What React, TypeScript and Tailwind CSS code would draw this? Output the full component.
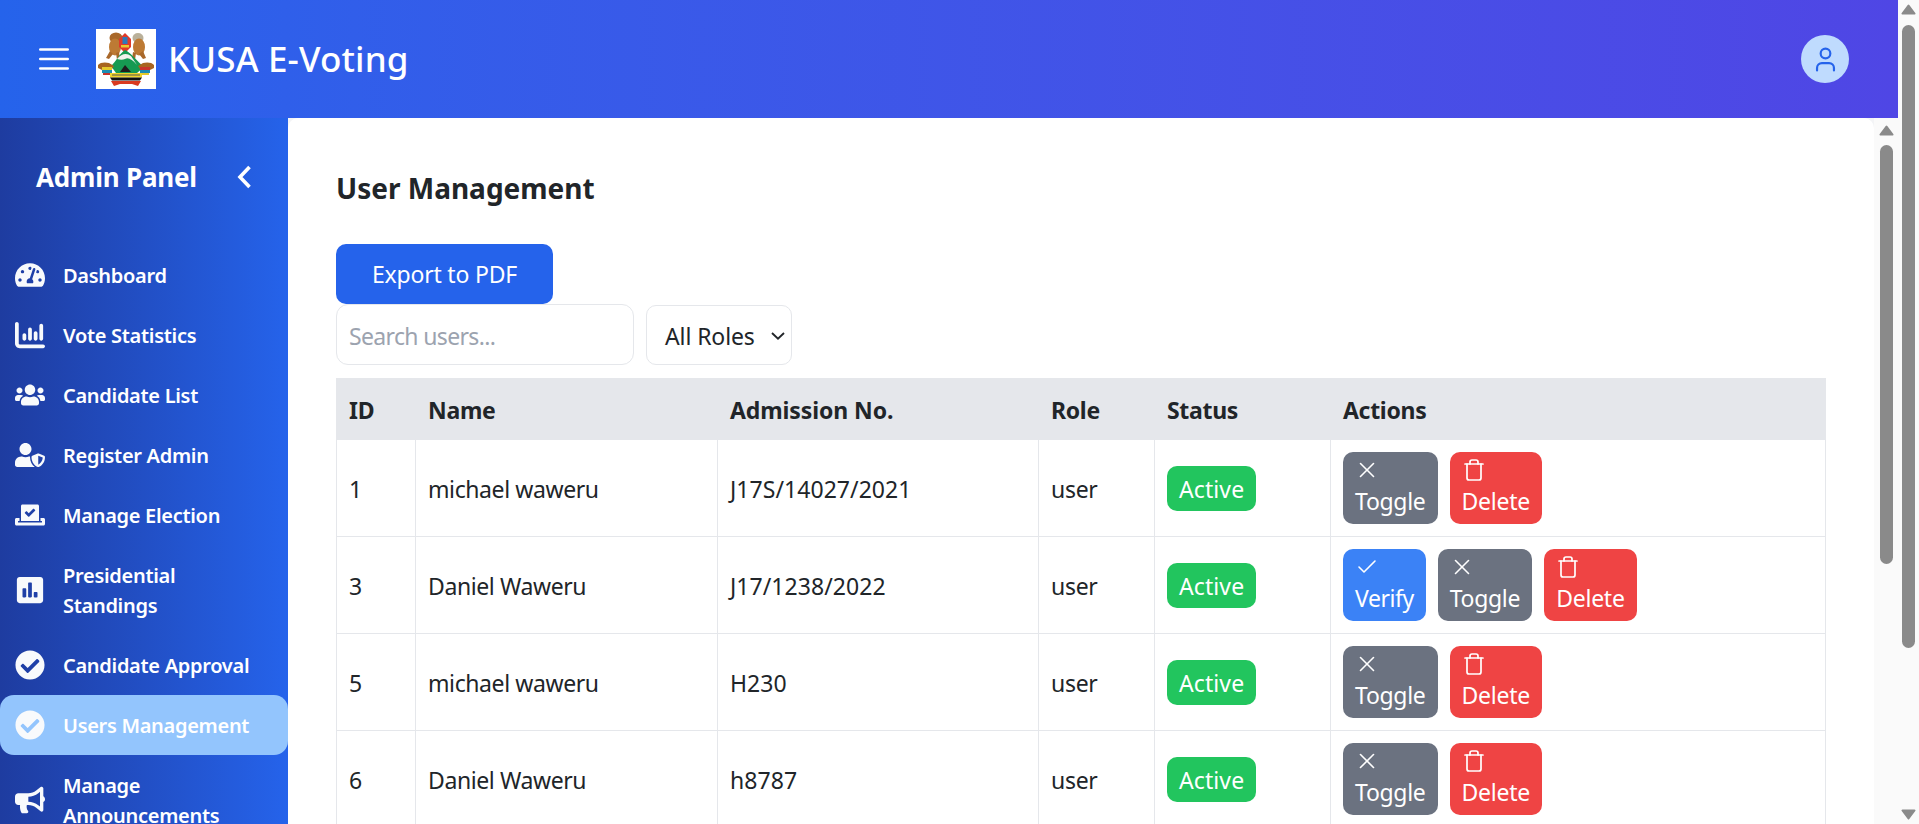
import React from "react";
import { User, X, Check, Trash } from "lucide-react";
import { FaTachometerAlt, FaUsers, FaUserShield, FaVoteYea, FaPoll, FaCheckCircle, FaBullhorn } from "react-icons/fa";
import { FaChartColumn } from "react-icons/fa6";

const Logo = () => (
  <div className="w-[60px] h-[60px] bg-white shrink-0">
    <svg viewBox="0 0 60 60" className="w-full h-full">
      <ellipse cx="20" cy="9" rx="6.5" ry="5.5" fill="#a9682a" />
      <ellipse cx="19" cy="18" rx="6" ry="8.5" fill="#bd7a34" />
      <path d="M14 22l-4 7 3 1 4-5zM20 24l1 7 3-1-1-7z" fill="#a9682a" />
      <ellipse cx="42" cy="9" rx="5.5" ry="5" fill="#b9b09a" />
      <ellipse cx="43" cy="18" rx="6" ry="8.5" fill="#bd7a34" />
      <path d="M47 22l3 7-3 1-4-5zM40 24l-1 7-3-1 1-7z" fill="#a9682a" />
      <path d="M29 4l6 6v8l-6 6-6-6v-8z" fill="#dd3a2a" />
      <rect x="26.5" y="8" width="5" height="7" fill="#2f78b8" />
      <path d="M25 16h8v2.5h-8z" fill="#e9c82e" />
      <path d="M15 37c4-3 8-12 14-16 6 3 12 11 19 17l-7 6H20z" fill="#169a52" />
      <path d="M21 30c5-6 10-6 14-3l6 9c-5-6-9-8-12-6-2 1-5 1-8 0z" fill="#f2f2ee" />
      <path d="M24 43l5-7 6 7z" fill="#1d1d1d" />
      <path d="M2 36c2-3 8-3 11-2l5 3-2 3-10 1-4-2z" fill="#a8641f" />
      <path d="M58 36c-2-3-8-3-11-2l-5 3 2 3 10 1 4-2z" fill="#a8641f" />
      <rect x="6" y="38" width="10" height="3" fill="#e4c92b" />
      <rect x="6" y="41" width="10" height="3" fill="#1c8db3" />
      <rect x="7" y="44" width="8" height="2" fill="#c9342b" />
      <rect x="44" y="38" width="10" height="3" fill="#c9342b" />
      <rect x="44" y="41" width="10" height="3" fill="#1c8db3" />
      <rect x="45" y="44" width="8" height="2" fill="#e4c92b" />
      <rect x="14" y="44" width="32" height="4.5" fill="#efd42a" />
      <rect x="16" y="45.5" width="28" height="1" fill="#555" />
      <path d="M14 48.5h32l-2 3H16z" fill="#111" />
      <path d="M15 52h30l-3 5-6-2H24l-6 2z" fill="#d93a20" />
    </svg>
  </div>
);

const ic = "w-[30px] h-[30px]";
const navItems: { label: string; icon: React.ReactNode; active?: boolean; h: string }[] = [
  { label: "Dashboard", icon: <FaTachometerAlt className={ic} />, h: "h-[60px]" },
  { label: "Vote Statistics", icon: <FaChartColumn className={ic} />, h: "h-[60px]" },
  { label: "Candidate List", icon: <FaUsers className={ic} />, h: "h-[60px]" },
  { label: "Register Admin", icon: <FaUserShield className={ic} />, h: "h-[60px]" },
  { label: "Manage Election", icon: <FaVoteYea className={ic} />, h: "h-[60px]" },
  { label: "Presidential Standings", icon: <FaPoll className={ic} />, h: "h-[90px]" },
  { label: "Candidate Approval", icon: <FaCheckCircle className={ic} />, h: "h-[60px]" },
  { label: "Users Management", icon: <FaCheckCircle className={ic} />, active: true, h: "h-[60px]" },
  { label: "Manage Announcements", icon: <FaBullhorn className={ic} />, h: "h-[90px]" },
];

const Btn = ({ kind }: { kind: "verify" | "toggle" | "delete" }) => {
  const cfg = {
    verify: { c: "bg-[#3b82f6] tracking-[-0.45px]", t: "Verify", i: <Check className="w-[24px] h-[24px]" strokeWidth={1.6} /> },
    toggle: { c: "bg-[#6b7280]", t: "Toggle", i: <X className="w-[26px] h-[26px] -ml-px" strokeWidth={1.5} /> },
    delete: { c: "bg-[#ef4444] tracking-[-0.25px]", t: "Delete", i: <Trash className="w-[24px] h-[24px]" strokeWidth={1.7} /> },
  }[kind];
  return (
    <div className={`${cfg.c} h-[72px] px-3 rounded-[10px] text-white flex flex-col`}>
      <span className="h-[36px] flex items-center">{cfg.i}</span>
      <span className="block leading-[26px]">{cfg.t}</span>
    </div>
  );
};

const rows: { id: number; name: string; adm: string; verify?: boolean }[] = [
  { id: 1, name: "michael waweru", adm: "J17S/14027/2021" },
  { id: 3, name: "Daniel Waweru", adm: "J17/1238/2022", verify: true },
  { id: 5, name: "michael waweru", adm: "H230" },
  { id: 6, name: "Daniel Waweru", adm: "h8787" },
];

const Tri = ({ down }: { down?: boolean }) => (
  <svg viewBox="0 0 15 11" className="w-[15px] h-[11px]" fill="#8a8a8a">
    <path d={down ? "M1.5 0.5h12a1 1 0 0 1 .8 1.6L8.3 10a1 1 0 0 1-1.6 0L.7 2.1A1 1 0 0 1 1.5 .5z" : "M1.5 10.5h12a1 1 0 0 0 .8-1.6L8.3 1a1 1 0 0 0-1.6 0L.7 8.9A1 1 0 0 0 1.5 10.5z"} />
  </svg>
);

const th = "border border-[#e5e7eb] px-3 pt-[2px] text-left font-bold";
const td = "border border-[#e5e7eb] px-3 pt-[2px]";
const tdPlain = "border border-[#e5e7eb] px-3";

export default function App() {
  return (
    <div className="flex h-[824px] w-full overflow-hidden bg-[#fafafa] text-[#212529]" style={{ fontFamily: '"Noto Sans", "Open Sans", sans-serif' }}>
      <div className="w-[1898px] shrink-0 flex flex-col h-full">
        <header className="h-[118px] shrink-0 flex items-center justify-between bg-gradient-to-r from-[#2563eb] to-[#4f46e5] pl-[39px] pr-[49px] text-white">
          <div className="flex items-center">
            <svg viewBox="0 0 30 22" className="w-[30px] h-[22px]" fill="none" stroke="white" strokeWidth="2.6" strokeLinecap="round"><path d="M1.3 1.5h27.4M1.3 11h27.4M1.3 20.5h27.4" /></svg>
            <div className="ml-[27px]"><Logo /></div>
            <span className="ml-[12px] text-[35px] font-medium tracking-[0.15px]">KUSA E-Voting</span>
          </div>
          <div className="w-[48px] h-[48px] rounded-full bg-[#bfdbfe] flex items-center justify-center">
            <User className="w-[29px] h-[29px] text-[#2563eb]" strokeWidth={1.8} />
          </div>
        </header>
        <div className="flex flex-1 min-h-0 bg-[#f3f4f6]">
          <aside className="w-[288px] shrink-0 bg-gradient-to-r from-[#1e3ca0] to-[#2563eb] text-white overflow-hidden">
            <div className="h-[118px] pl-[36px] pr-[36px] flex items-center justify-between">
              <span className="text-[26px] font-bold tracking-[-0.2px]">Admin Panel</span>
              <svg viewBox="0 0 15 24" className="w-[15px] h-[24px]" fill="none" stroke="white" strokeWidth="3.6"><path d="M12.5 2L3 12l9.5 10" /></svg>
            </div>
            <nav className="mt-[9px]">
              {navItems.map((n) => (
                <div key={n.label} className={`${n.h} flex items-center pl-[15px] gap-[18px] rounded-[14px] ${n.active ? "bg-[#93c5fd]" : ""}`}>
                  <span className="shrink-0 text-[#f8fafc]">{n.icon}</span>
                  <span className="text-[20px] font-semibold leading-[30px] max-w-[200px] tracking-[-0.3px] pt-[2px]">{n.label}</span>
                </div>
              ))}
            </nav>
          </aside>
          <main className="flex-1 min-w-0 bg-white rounded-t-[10px] overflow-hidden flex">
            <div className="flex-1 min-w-0 px-[48px] pt-[48px] text-[23px] tracking-[-0.3px]">
              <h1 className="text-[28px] font-bold leading-[44px] tracking-normal">User Management</h1>
              <button className="mt-[34px] block w-[217px] h-[60px] bg-[#2563eb] text-white rounded-[10px] tracking-[-0.2px]">Export to PDF</button>
              <div className="flex items-center gap-3 h-[61px]">
                <div className="w-[298px] h-[61px] pt-[3px] border border-[#e5e7eb] rounded-[12px] flex items-center pl-3 text-[#9ca3af] tracking-[-0.65px]">Search users...</div>
                <div className="w-[146px] h-[60px] pt-[3px] border border-[#e5e7eb] rounded-[10px] flex items-center pl-[18px] tracking-[-0.1px]">
                  All Roles
                  <svg viewBox="0 0 14 8" className="ml-[16px] w-[14px] h-[8px]" fill="none" stroke="#212529" strokeWidth="1.9"><path d="M1 1l6 5.6L13 1" /></svg>
                </div>
              </div>
              <table className="mt-[13px] w-[1490px] table-fixed border-collapse">
                <colgroup>
                  <col className="w-[79px]" /><col className="w-[302px]" /><col className="w-[321px]" /><col className="w-[116px]" /><col className="w-[176px]" /><col />
                </colgroup>
                <thead>
                  <tr className="h-[61px] bg-[#e5e7eb]">
                    {["ID", "Name", "Admission No.", "Role", "Status", "Actions"].map((h) => (
                      <th key={h} className={h === "Admission No." ? `${th} tracking-[-0.1px]` : th}>{h}</th>
                    ))}
                  </tr>
                </thead>
                <tbody>
                  {rows.map((r) => (
                    <tr key={r.id} className="h-[97px]">
                      <td className={td}>{r.id}</td>
                      <td className={`${td} tracking-[-0.4px]`}>{r.name}</td>
                      <td className={`${td} tracking-[0.05px]`}>{r.adm}</td>
                      <td className={td}>user</td>
                      <td className={tdPlain}><span className="inline-block bg-[#22c55e] text-white rounded-[10px] px-3 pt-px h-[45px] leading-[45px] tracking-[0.1px]">Active</span></td>
                      <td className={tdPlain}>
                        <div className="flex gap-3">
                          {r.verify && <Btn kind="verify" />}
                          <Btn kind="toggle" />
                          <Btn kind="delete" />
                        </div>
                      </td>
                    </tr>
                  ))}
                </tbody>
              </table>
            </div>
          </main>
          <div className="w-[24px] shrink-0 bg-[#fafafa] flex flex-col items-center pt-[7px]">
            <Tri />
            <div className="mt-[9px] w-[13px] h-[419px] rounded-full bg-[#8a8a8a]" />
          </div>
        </div>
      </div>
      <div className="flex-1 bg-[#fafafa] flex flex-col items-center pt-[4px] pb-[4px]">
        <Tri />
        <div className="mt-[10px] w-[13px] h-[623px] rounded-full bg-[#8a8a8a]" />
        <div className="mt-auto"><Tri down /></div>
      </div>
    </div>
  );
}
